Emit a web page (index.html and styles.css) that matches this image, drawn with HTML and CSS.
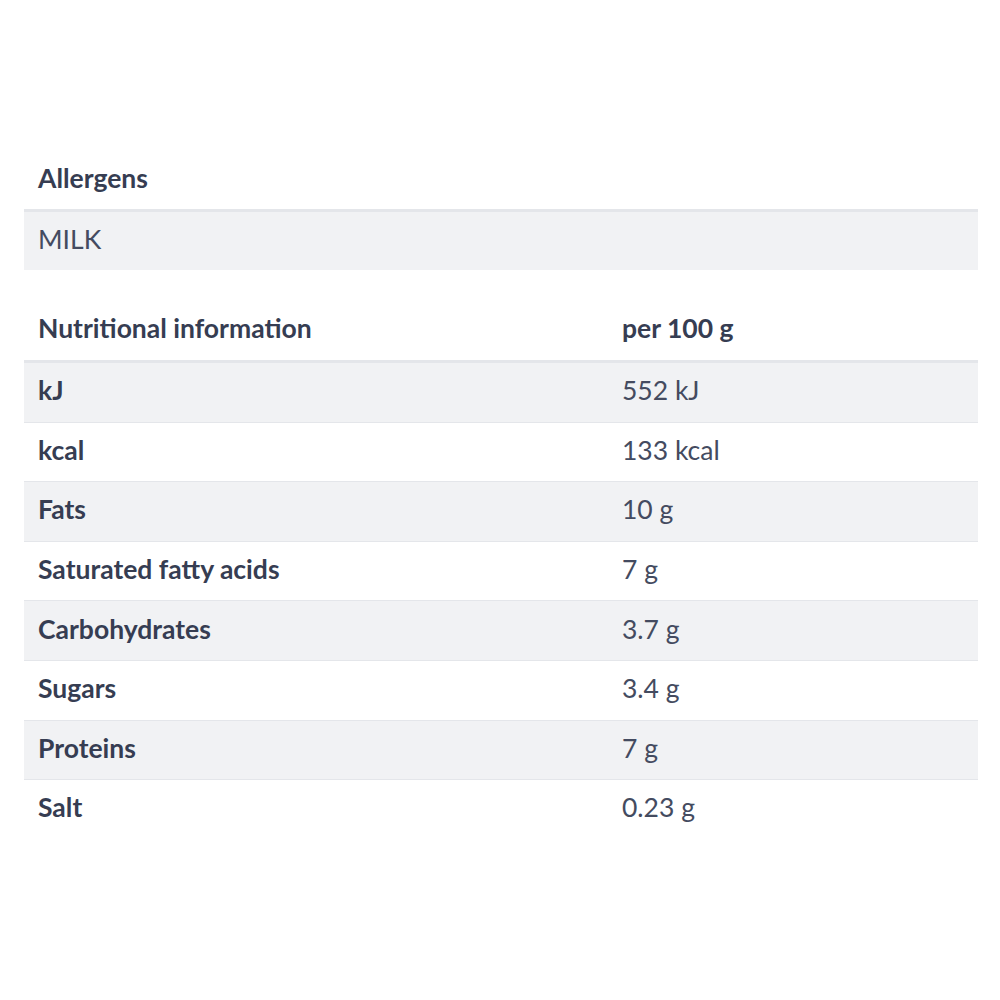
FILE: index.html
```html
<!DOCTYPE html>
<html lang="en">
<head>
<meta charset="utf-8">
<title>Product information</title>
<link rel="stylesheet" href="styles.css">
</head>
<body>
<main class="page">
  <section class="block">
    <div class="head-row">
      <div class="cell head">Allergens</div>
    </div>
    <div class="row odd single">
      <div class="cell value">MILK</div>
    </div>
  </section>

  <section class="block nutrition">
    <div class="head-row grid">
      <div class="cell head">Nutritional information</div>
      <div class="cell head">per 100 g</div>
    </div>
    <div class="row grid odd"><div class="cell label">kJ</div><div class="cell value">552 kJ</div></div>
    <div class="row grid"><div class="cell label">kcal</div><div class="cell value">133 kcal</div></div>
    <div class="row grid odd"><div class="cell label">Fats</div><div class="cell value">10 g</div></div>
    <div class="row grid"><div class="cell label">Saturated fatty acids</div><div class="cell value">7 g</div></div>
    <div class="row grid odd"><div class="cell label">Carbohydrates</div><div class="cell value">3.7 g</div></div>
    <div class="row grid"><div class="cell label">Sugars</div><div class="cell value">3.4 g</div></div>
    <div class="row grid odd"><div class="cell label">Proteins</div><div class="cell value">7 g</div></div>
    <div class="row grid last"><div class="cell label">Salt</div><div class="cell value">0.23 g</div></div>
  </section>
</main>
</body>
</html>
```

FILE: styles.css
```css
html, body {
  margin: 0;
  padding: 0;
  background: #ffffff;
}

body {
  font-family: Lato, "Open Sans", "Liberation Sans", sans-serif;
  color: #383f54;
}

.page {
  width: 954px;
  margin-left: 24px;
  padding-top: 150px;
}

.block.nutrition {
  margin-top: 30px;
}

.grid {
  display: grid;
  grid-template-columns: 584px 1fr;
}

.head-row {
  height: 59px;
  display: flex;
  align-items: center;
  border-bottom: 3px solid #e4e6ea;
}

.head-row.grid {
  display: grid;
  align-items: center;
  height: 60px;
}

.row {
  height: 58.6px;
  display: flex;
  align-items: center;
  border-bottom: 1px solid #e4e6ea;
}

.row.grid {
  display: grid;
  align-items: center;
}

.row.single {
  height: 58px;
  border-bottom: none;
}

.row.last {
  border-bottom: none;
}

.odd {
  background: #f1f2f4;
}

.cell {
  padding-left: 14px;
  padding-bottom: 4px;
  font-size: 26.5px;
  line-height: 32px;
}

.head,
.label {
  font-weight: 700;
  color: #363d52;
}

.value {
  font-weight: 400;
  color: #444b60;
}
```
